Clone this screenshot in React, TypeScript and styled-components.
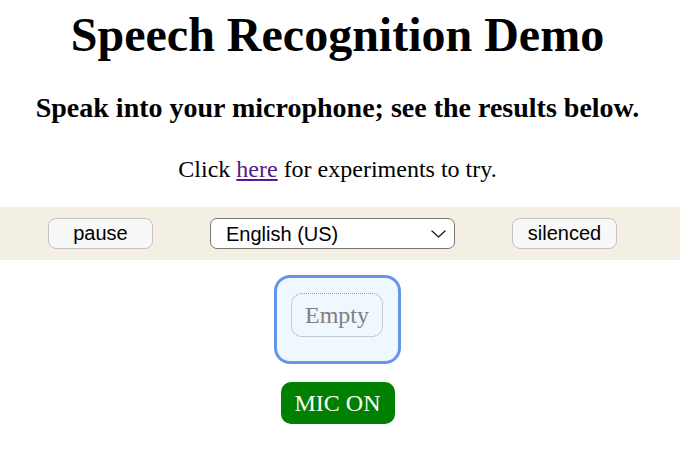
import React from "react";
import styled, { createGlobalStyle } from "styled-components";

const GlobalStyle = createGlobalStyle`
  html, body {
    margin: 0;
    padding: 0;
    background: #ffffff;
  }
  body {
    font-family: "Liberation Serif", "Times New Roman", serif;
    color: #000000;
  }
`;

const Page = styled.div`
  padding-top: 8px;
  display: flex;
  flex-direction: column;
`;

const Intro = styled.header`
  display: flex;
  flex-direction: column;
  align-items: center;
  padding-right: 5px;
  text-align: center;
`;

const Title = styled.h1`
  margin: 0;
  font-size: 48px;
  font-weight: bold;
  line-height: 53px;
`;

const Subtitle = styled.h2`
  margin: 31px 0 0;
  font-size: 28px;
  font-weight: bold;
  line-height: 31px;
`;

const Note = styled.p`
  margin: 33px 0 0;
  font-size: 24px;
  line-height: 27px;
`;

const Link = styled.a`
  color: #551a8b;
  text-decoration: underline;
`;

const Toolbar = styled.div`
  margin-top: 24px;
  height: 53px;
  background: #f3efe3;
  display: flex;
  align-items: center;
  gap: 57px;
  padding-left: 48px;
  box-sizing: border-box;
`;

const ToolButton = styled.button`
  width: 105px;
  height: 31px;
  box-sizing: border-box;
  border: 1px solid #c2c2c2;
  border-radius: 8px;
  background: #f8f8f8;
  font-family: "Liberation Sans", Arial, sans-serif;
  font-size: 20px;
  color: #000;
  padding: 0;
  cursor: pointer;
`;

const SelectWrap = styled.div`
  position: relative;
  width: 245px;
  height: 31px;
`;

const LangSelect = styled.select`
  appearance: none;
  -webkit-appearance: none;
  width: 100%;
  height: 100%;
  box-sizing: border-box;
  border: 1px solid #767676;
  border-radius: 7px;
  background: #ffffff;
  font-family: "Liberation Sans", Arial, sans-serif;
  font-size: 20px;
  color: #000;
  padding: 0 0 0 15px;
  outline: none;
`;

const Chevron = styled.svg`
  position: absolute;
  right: 9px;
  top: 12px;
  width: 15px;
  height: 8px;
  pointer-events: none;
`;

const Stage = styled.main`
  display: flex;
  flex-direction: column;
  align-items: center;
  padding-right: 5px;
`;

const ResultBox = styled.div`
  margin-top: 15px;
  width: 127px;
  height: 89px;
  box-sizing: border-box;
  border: 3px solid #6495ed;
  border-radius: 16px;
  background: #f0f8ff;
  padding: 15px 0 0 14px;
`;

const Placeholder = styled.div`
  width: 92px;
  height: 44px;
  box-sizing: border-box;
  border: 1px dotted #9a9a9a;
  border-radius: 11px;
  display: flex;
  align-items: center;
  justify-content: center;
  font-size: 24px;
  color: #808080;
`;

const MicBadge = styled.div`
  margin-top: 18px;
  height: 42px;
  width: 114px;
  box-sizing: border-box;
  border-radius: 10px;
  background: #008000;
  color: #ffffff;
  font-size: 24px;
  display: flex;
  align-items: center;
  justify-content: center;
`;

export default function App() {
  return (
    <>
      <GlobalStyle />
      <Page>
        <Intro>
          <Title>Speech Recognition Demo</Title>
          <Subtitle>Speak into your microphone; see the results below.</Subtitle>
          <Note>
            Click <Link href="#">here</Link> for experiments to try.
          </Note>
        </Intro>
        <Toolbar>
          <ToolButton>pause</ToolButton>
          <SelectWrap>
            <LangSelect defaultValue="en-US">
              <option value="en-US">English (US)</option>
              <option value="en-GB">English (UK)</option>
            </LangSelect>
            <Chevron viewBox="0 0 15 8">
              <path d="M1 1 L7.5 7 L14 1" fill="none" stroke="#222" strokeWidth="1.4" strokeLinecap="round" strokeLinejoin="round" />
            </Chevron>
          </SelectWrap>
          <ToolButton>silenced</ToolButton>
        </Toolbar>
        <Stage>
          <ResultBox>
            <Placeholder>Empty</Placeholder>
          </ResultBox>
          <MicBadge>MIC ON</MicBadge>
        </Stage>
      </Page>
    </>
  );
}
